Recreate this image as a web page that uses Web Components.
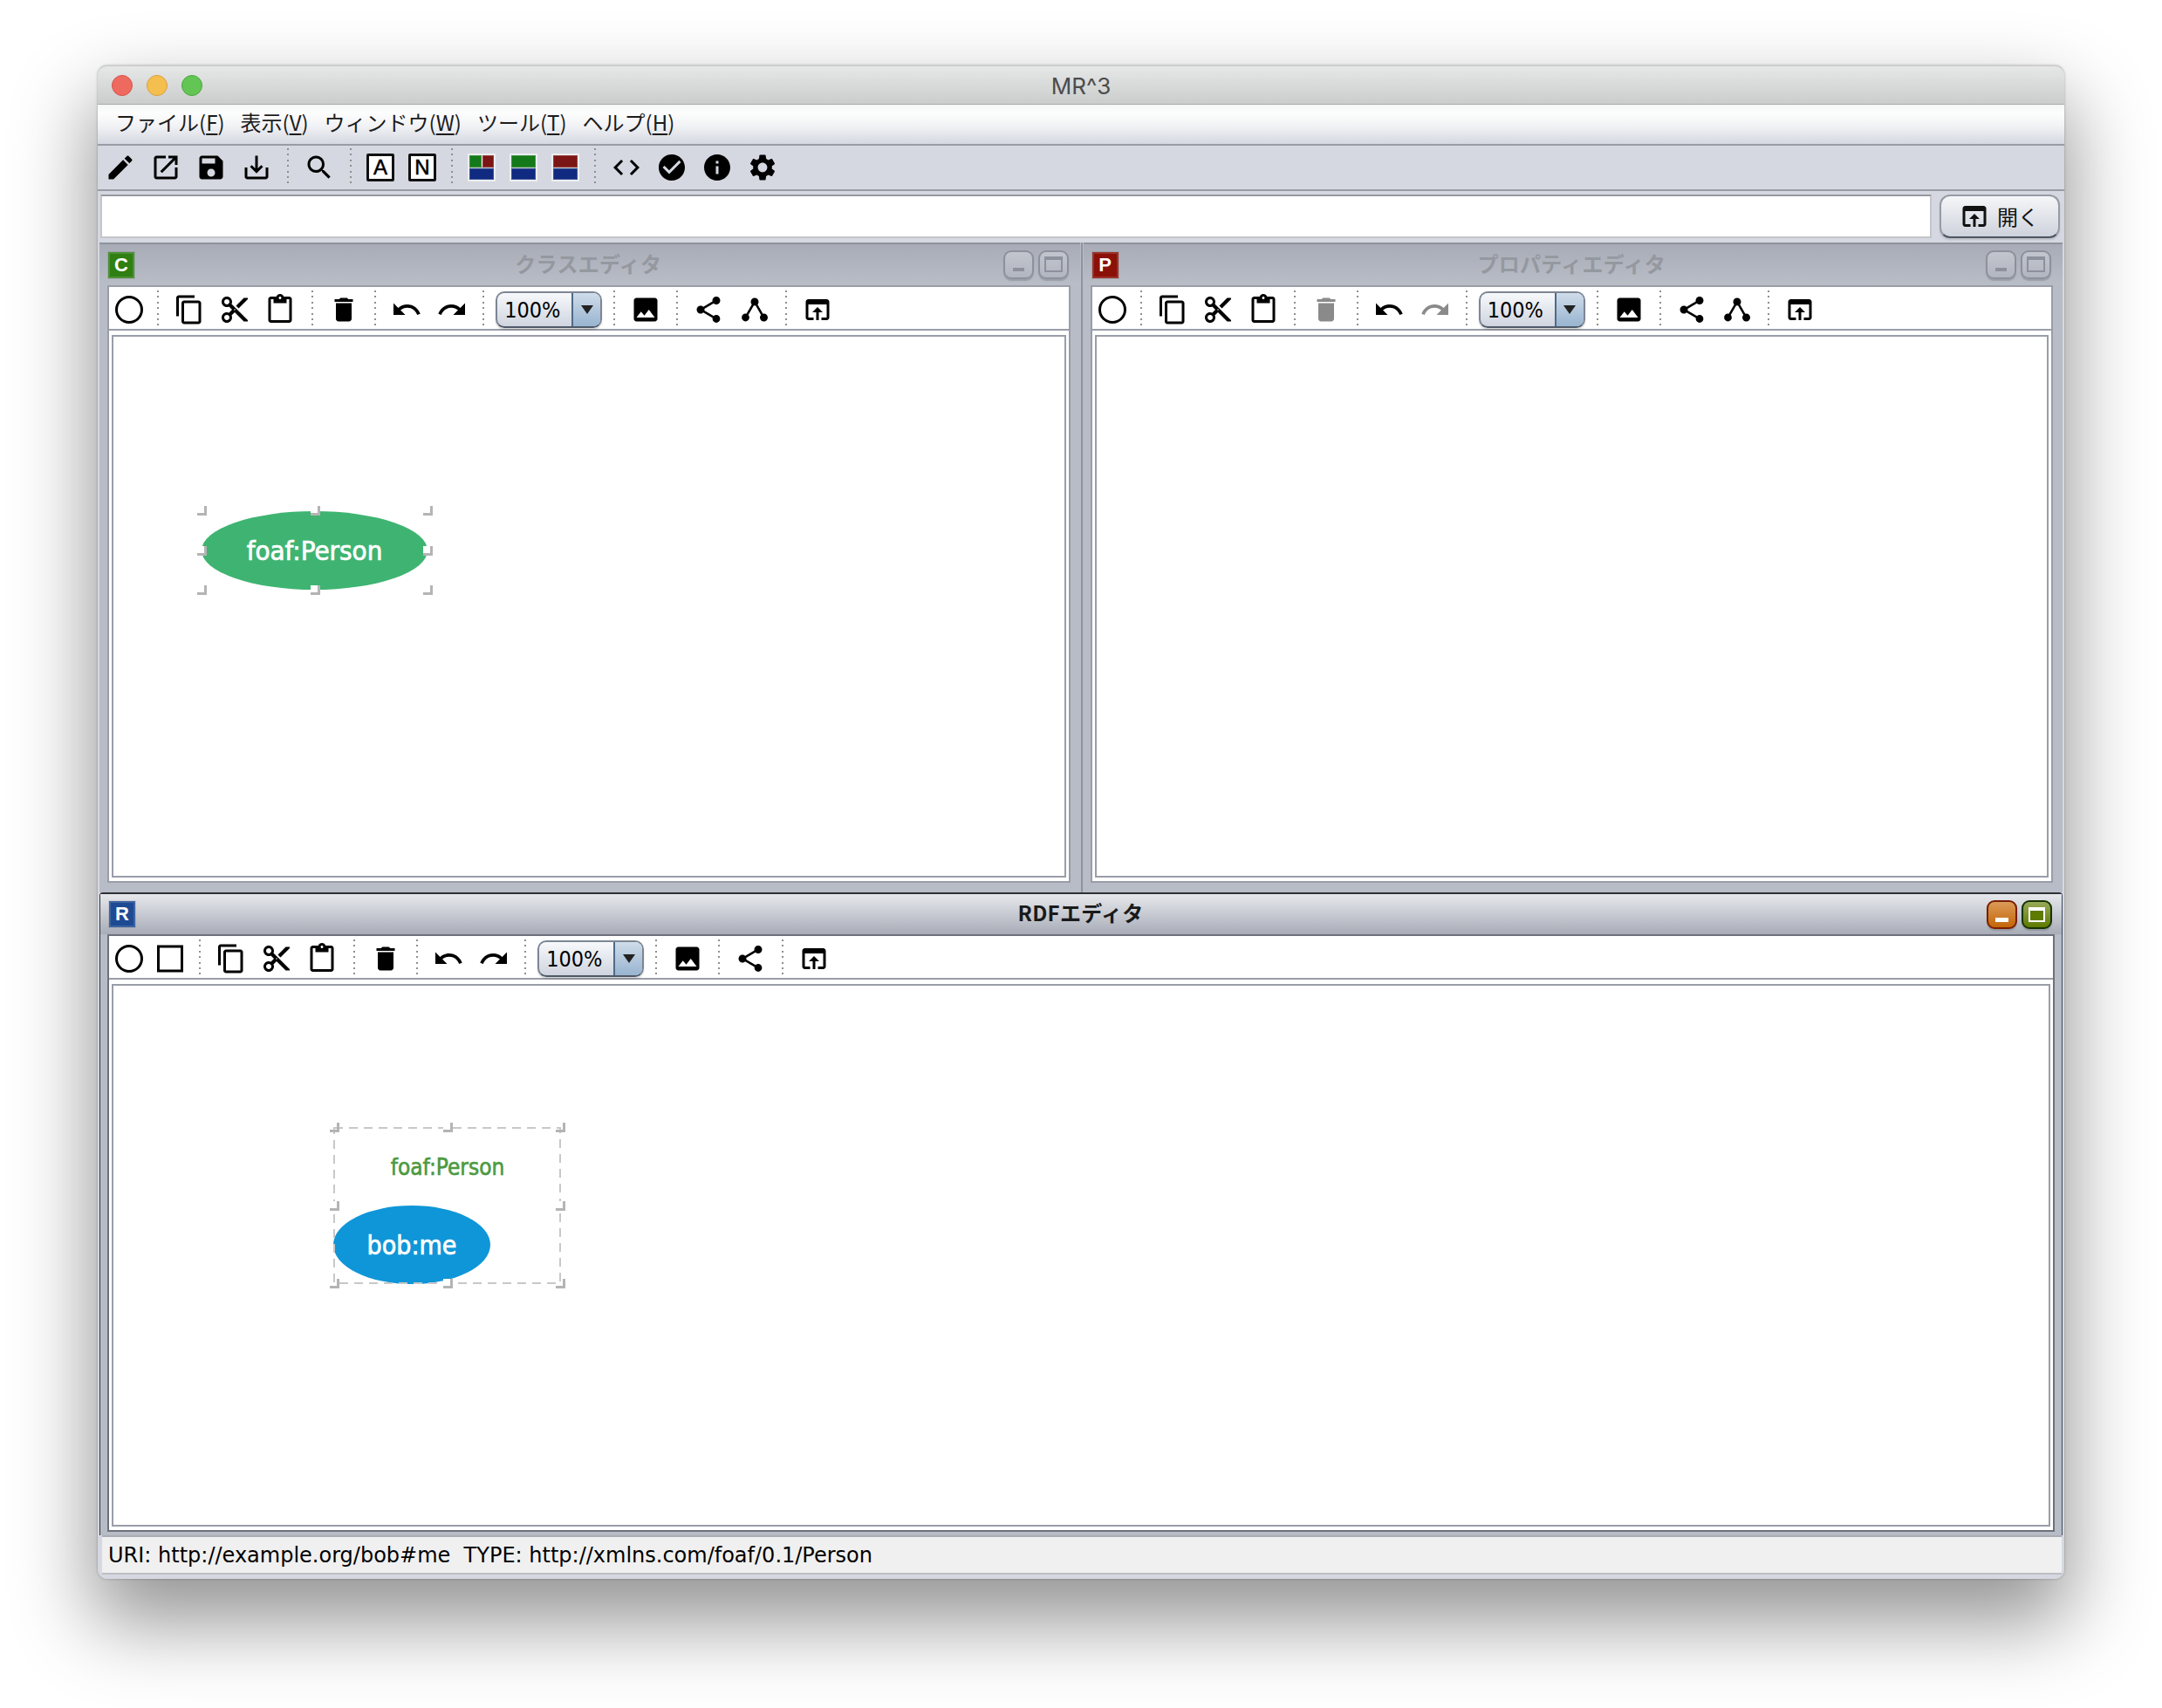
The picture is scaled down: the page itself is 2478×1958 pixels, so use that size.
<!DOCTYPE html>
<html lang="ja">
<head>
<meta charset="utf-8">
<title>MR^3</title>
<style>
  html, body { margin: 0; background: #fff; }
  body { padding: 75px 0 0 112px; height: 1958px; box-sizing: border-box; overflow: hidden; font-family: "DejaVu Sans", "Noto Sans CJK JP", sans-serif; }
</style>
</head>
<body>
<mac-window label="MR^3">
  <menu-bar>
    <menu-item label="ファイル" key="F"></menu-item>
    <menu-item label="表示" key="V"></menu-item>
    <menu-item label="ウィンドウ" key="W"></menu-item>
    <menu-item label="ツール" key="T"></menu-item>
    <menu-item label="ヘルプ" key="H"></menu-item>
  </menu-bar>
  <tool-bar main>
    <tool-icon name="edit"></tool-icon>
    <tool-icon name="openNew"></tool-icon>
    <tool-icon name="save"></tool-icon>
    <tool-icon name="download"></tool-icon>
    <tool-sep></tool-sep>
    <tool-icon name="search"></tool-icon>
    <tool-sep></tool-sep>
    <letter-icon>A</letter-icon>
    <letter-icon>N</letter-icon>
    <tool-sep></tool-sep>
    <layout-icon top="split"></layout-icon>
    <layout-icon top="#14791a"></layout-icon>
    <layout-icon top="#7c1515"></layout-icon>
    <tool-sep></tool-sep>
    <tool-icon name="code"></tool-icon>
    <tool-icon name="check"></tool-icon>
    <tool-icon name="info"></tool-icon>
    <tool-icon name="settings"></tool-icon>
  </tool-bar>
  <uri-bar></uri-bar>
  <editor-desktop>
    <div slot="top" style="display:flex;height:100%;min-width:0">
      <editor-panel label="クラスエディタ" badge="C" color="#2f7f12">
        <tool-bar slot="tools">
          <tool-icon name="circle" w="46"></tool-icon>
          <tool-sep></tool-sep>
          <tool-icon name="copy"></tool-icon>
          <tool-icon name="cut"></tool-icon>
          <tool-icon name="paste"></tool-icon>
          <tool-sep></tool-sep>
          <tool-icon name="trash"></tool-icon>
          <tool-sep></tool-sep>
          <tool-icon name="undo"></tool-icon>
          <tool-icon name="redo"></tool-icon>
          <tool-sep></tool-sep>
          <zoom-combo></zoom-combo>
          <tool-sep></tool-sep>
          <tool-icon name="image"></tool-icon>
          <tool-sep></tool-sep>
          <tool-icon name="share"></tool-icon>
          <tool-icon name="tree"></tool-icon>
          <tool-sep></tool-sep>
          <tool-icon name="openBrowser"></tool-icon>
        </tool-bar>
        <graph-node x="101" y="200" w="259" h="90" color="#3fb472" size="31">foaf:Person</graph-node>
        <sel-frame x="96" y="194" w="270" h="102"></sel-frame>
      </editor-panel>
      <panel-split></panel-split>
      <editor-panel label="プロパティエディタ" badge="P" color="#8b1008" style="--pad-l:8px">
        <tool-bar slot="tools">
          <tool-icon name="circle" w="46"></tool-icon>
          <tool-sep></tool-sep>
          <tool-icon name="copy"></tool-icon>
          <tool-icon name="cut"></tool-icon>
          <tool-icon name="paste"></tool-icon>
          <tool-sep></tool-sep>
          <tool-icon name="trash" off></tool-icon>
          <tool-sep></tool-sep>
          <tool-icon name="undo"></tool-icon>
          <tool-icon name="redo" off></tool-icon>
          <tool-sep></tool-sep>
          <zoom-combo></zoom-combo>
          <tool-sep></tool-sep>
          <tool-icon name="image"></tool-icon>
          <tool-sep></tool-sep>
          <tool-icon name="share"></tool-icon>
          <tool-icon name="tree"></tool-icon>
          <tool-sep></tool-sep>
          <tool-icon name="openBrowser"></tool-icon>
        </tool-bar>
      </editor-panel>
    </div>
    <editor-panel slot="bottom" active label="RDFエディタ" badge="R" color="#1d4a93">
      <tool-bar slot="tools">
        <tool-icon name="circle" w="46"></tool-icon>
        <tool-icon name="rect" w="48"></tool-icon>
        <tool-sep></tool-sep>
        <tool-icon name="copy"></tool-icon>
        <tool-icon name="cut"></tool-icon>
        <tool-icon name="paste"></tool-icon>
        <tool-sep></tool-sep>
        <tool-icon name="trash"></tool-icon>
        <tool-sep></tool-sep>
        <tool-icon name="undo"></tool-icon>
        <tool-icon name="redo"></tool-icon>
        <tool-sep></tool-sep>
        <zoom-combo></zoom-combo>
        <tool-sep></tool-sep>
        <tool-icon name="image"></tool-icon>
        <tool-sep></tool-sep>
        <tool-icon name="share"></tool-icon>
        <tool-sep></tool-sep>
        <tool-icon name="openBrowser"></tool-icon>
      </tool-bar>
      <sel-frame x="248" y="157" w="270" h="190" dashed></sel-frame>
      <graph-node x="252" y="252" w="180" h="90" color="#0f96d8" size="30">bob:me</graph-node>
      <graph-label x="253" y="191" w="260" color="#4c9a3f" size="26">foaf:Person</graph-label>
    </editor-panel>
  </editor-desktop>
  <status-bar>URI: http://example.org/bob#me&nbsp;&nbsp;TYPE: http://xmlns.com/foaf/0.1/Person</status-bar>
</mac-window>

<script>
// material style icons, 24x24 viewBox
const ICONS = {
  edit: 'M3 17.25V21h3.75L17.81 9.94l-3.75-3.75L3 17.25zM20.71 7.04c.39-.39.39-1.02 0-1.41l-2.34-2.34c-.39-.39-1.02-.39-1.41 0l-1.83 1.83 3.75 3.75 1.83-1.83z',
  openNew: 'M19 19H5V5h7V3H5c-1.11 0-2 .9-2 2v14c0 1.1.89 2 2 2h14c1.1 0 2-.9 2-2v-7h-2v7zM14 3v2h3.59l-9.83 9.83 1.41 1.41L19 6.41V10h2V3h-7z',
  save: 'M17 3H5c-1.11 0-2 .9-2 2v14c0 1.1.89 2 2 2h14c1.1 0 2-.9 2-2V7l-4-4zm-5 16c-1.66 0-3-1.34-3-3s1.34-3 3-3 3 1.34 3 3-1.34 3-3 3zm3-10H5V5h10v4z',
  download: 'M19 12v7H5v-7H3v7c0 1.1.9 2 2 2h14c1.1 0 2-.9 2-2v-7h-2zm-6 .67l2.59-2.58L17 11.5l-5 5-5-5 1.41-1.41L11 12.67V3h2z',
  search: 'M15.5 14h-.79l-.28-.27C15.41 12.59 16 11.11 16 9.5 16 5.91 13.09 3 9.5 3S3 5.91 3 9.5 5.91 16 9.5 16c1.61 0 3.09-.59 4.23-1.57l.27.28v.79l5 4.99L20.49 19l-4.99-5zm-6 0C7.01 14 5 11.99 5 9.5S7.01 5 9.5 5 14 7.01 14 9.5 11.99 14 9.5 14z',
  code: 'M9.4 16.6L4.8 12l4.6-4.6L8 6l-6 6 6 6 1.4-1.4zm5.2 0l4.6-4.6-4.6-4.6L16 6l6 6-6 6-1.4-1.4z',
  check: 'M12 2C6.48 2 2 6.48 2 12s4.48 10 10 10 10-4.48 10-10S17.52 2 12 2zm-2 15l-5-5 1.41-1.41L10 14.17l7.59-7.59L19 8l-9 9z',
  info: 'M12 2C6.48 2 2 6.48 2 12s4.48 10 10 10 10-4.48 10-10S17.52 2 12 2zm1 15h-2v-6h2v6zm0-8h-2V7h2v2z',
  settings: 'M19.14 12.94c.04-.3.06-.61.06-.94 0-.32-.02-.64-.07-.94l2.03-1.58c.18-.14.23-.41.12-.61l-1.92-3.32c-.12-.22-.37-.29-.59-.22l-2.39.96c-.5-.38-1.03-.7-1.62-.94l-.36-2.54c-.04-.24-.24-.41-.48-.41h-3.84c-.24 0-.43.17-.47.41l-.36 2.54c-.59.24-1.13.57-1.62.94l-2.39-.96c-.22-.08-.47 0-.59.22L2.74 8.87c-.12.21-.08.47.12.61l2.03 1.58c-.05.3-.09.63-.09.94s.02.64.07.94l-2.03 1.58c-.18.14-.23.41-.12.61l1.92 3.32c.12.22.37.29.59.22l2.39-.96c.5.38 1.03.7 1.62.94l.36 2.54c.05.24.24.41.48.41h3.84c.24 0 .44-.17.47-.41l.36-2.54c.59-.24 1.13-.56 1.62-.94l2.39.96c.22.08.47 0 .59-.22l1.92-3.32c.12-.22.07-.47-.12-.61l-2.01-1.58zM12 15.6c-1.98 0-3.6-1.62-3.6-3.6s1.62-3.6 3.6-3.6 3.6 1.62 3.6 3.6-1.62 3.6-3.6 3.6z',
  copy: 'M16 1H4c-1.1 0-2 .9-2 2v14h2V3h12V1zm3 4H8c-1.1 0-2 .9-2 2v14c0 1.1.9 2 2 2h11c1.1 0 2-.9 2-2V7c0-1.1-.9-2-2-2zm0 16H8V7h11v14z',
  cut: 'M9.64 7.64c.23-.5.36-1.05.36-1.64 0-2.21-1.79-4-4-4S2 3.79 2 6s1.79 4 4 4c.59 0 1.14-.13 1.64-.36L10 12l-2.36 2.36C7.14 14.13 6.59 14 6 14c-2.21 0-4 1.79-4 4s1.79 4 4 4 4-1.79 4-4c0-.59-.13-1.14-.36-1.64L12 14l7 7h3v-1L9.64 7.64zM6 8c-1.1 0-2-.89-2-2s.9-2 2-2 2 .89 2 2-.9 2-2 2zm0 12c-1.1 0-2-.89-2-2s.9-2 2-2 2 .89 2 2-.9 2-2 2zm6-7.5c-.28 0-.5-.22-.5-.5s.22-.5.5-.5.5.22.5.5-.22.5-.5.5zM19 3l-6 6 2 2 7-7V3z',
  paste: 'M19 2h-4.18C14.4.84 13.3 0 12 0c-1.3 0-2.4.84-2.82 2H5c-1.1 0-2 .9-2 2v16c0 1.1.9 2 2 2h14c1.1 0 2-.9 2-2V4c0-1.1-.9-2-2-2zm-7 0c.55 0 1 .45 1 1s-.45 1-1 1-1-.45-1-1 .45-1 1-1zm7 18H5V4h2v3h10V4h2v16z',
  trash: 'M6 19c0 1.1.9 2 2 2h8c1.1 0 2-.9 2-2V7H6v12zM19 4h-3.5l-1-1h-5l-1 1H5v2h14V4z',
  undo: 'M12.5 8c-2.65 0-5.05.99-6.9 2.6L2 7v9h9l-3.62-3.62c1.39-1.16 3.16-1.88 5.12-1.88 3.54 0 6.55 2.31 7.6 5.5l2.37-.78C21.08 11.03 17.15 8 12.5 8z',
  redo: 'M18.4 10.6C16.55 8.99 14.15 8 11.5 8c-4.65 0-8.58 3.03-9.96 7.22L3.9 16c1.05-3.19 4.05-5.5 7.6-5.5 1.95 0 3.73.72 5.12 1.88L13 16h9V7l-3.6 3.6z',
  image: 'M21 19V5c0-1.1-.9-2-2-2H5c-1.1 0-2 .9-2 2v14c0 1.1.9 2 2 2h14c1.1 0 2-.9 2-2zM8.5 13.5l2.5 3.01L14.5 12l4.5 6H5l3.5-4.5z',
  share: 'M18 16.08c-.76 0-1.44.3-1.96.77L8.91 12.7c.05-.23.09-.46.09-.7s-.04-.47-.09-.7l7.05-4.11c.54.5 1.25.81 2.04.81 1.66 0 3-1.34 3-3s-1.34-3-3-3-3 1.34-3 3c0 .24.04.47.09.7L8.04 9.81C7.5 9.31 6.79 9 6 9c-1.66 0-3 1.34-3 3s1.34 3 3 3c.79 0 1.5-.31 2.04-.81l7.12 4.16c-.05.21-.08.43-.08.65 0 1.61 1.31 2.92 2.92 2.92 1.61 0 2.92-1.31 2.92-2.92s-1.31-2.92-2.92-2.92z',
  openBrowser: 'M19 4H5c-1.11 0-2 .9-2 2v12c0 1.1.89 2 2 2h4v-2H5V8h14v10h-4v2h4c1.1 0 2-.9 2-2V6c0-1.1-.89-2-2-2zm-7 6l-4 4h3v6h2v-6h3l-4-4z'
};
const LUCIDA = '"DejaVu Sans", "Noto Sans CJK JP", sans-serif';
const JP = '"Noto Sans CJK JP", "DejaVu Sans", sans-serif';

function iconSvg(name) {
  if (name === 'circle') return '<svg viewBox="0 0 36 36" width="36" height="36"><circle cx="18" cy="18" r="14.5" fill="none" stroke="currentColor" stroke-width="3"/></svg>';
  if (name === 'rect') return '<svg viewBox="0 0 36 36" width="36" height="36"><rect x="4.5" y="4" width="27" height="28" fill="none" stroke="currentColor" stroke-width="3"/></svg>';
  if (name === 'tree') return '<svg viewBox="0 0 24 24" width="36" height="36"><path transform="rotate(90 12 12)" fill="currentColor" d="' + ICONS.share + '"/></svg>';
  return '<svg viewBox="0 0 24 24" width="36" height="36"><path fill="currentColor" d="' + ICONS[name] + '"/></svg>';
}

class MacWindow extends HTMLElement {
  constructor() {
    super();
    this.attachShadow({ mode: 'open' });
    this.shadowRoot.innerHTML = `
      <style>
        :host {
          display: flex;
          flex-direction: column;
          width: 2254px;
          height: 1735px;
          border-radius: 11px;
          background: #d5d8e1;
          box-shadow: 0 44px 90px 6px rgba(0, 0, 0, 0.42), 0 0 3px rgba(0, 0, 0, 0.3);
        }
        .title {
          flex: none;
          border-top: 1px solid #c9c9c9;
          border-radius: 11px 11px 0 0;
          background: linear-gradient(#e6e7e7, #cbcccc);
          border-bottom: 1px solid #a9a9a9;
          height: 43px;
          display: grid;
          grid-template-columns: 1fr auto 1fr;
          align-items: center;
        }
        .lights { display: flex; gap: 16px; padding-left: 16px; }
        .lights i { width: 24px; height: 24px; border-radius: 50%; box-sizing: border-box; border: 1px solid; }
        .red { background: #ee6a5f; border-color: #d5534a !important; }
        .amber { background: #f5bf4f; border-color: #d8a03a !important; }
        .green { background: #62c554; border-color: #4aa83e !important; }
        .name { font: 26px Inter, "Liberation Sans", sans-serif; color: #4c4c4c; padding-top: 1px; }
      </style>
      <div class="title">
        <div class="lights"><i class="red"></i><i class="amber"></i><i class="green"></i></div>
        <div class="name"></div>
        <div></div>
      </div>
      <slot></slot>
    `;
    this.shadowRoot.querySelector('.name').textContent = this.getAttribute('label');
  }
}

class MenuBar extends HTMLElement {
  constructor() {
    super();
    this.attachShadow({ mode: 'open' });
    this.shadowRoot.innerHTML = `
      <style>
        :host {
          display: flex;
          flex: none;
          align-items: center;
          gap: 18px;
          height: 45px;
          box-sizing: border-box;
          padding: 0 0 5px 20px;
          background: linear-gradient(#f4f6f6 0, #fdfdfd 22%, #f1f2f5 55%, #d5d8e1 100%);
        }
      </style>
      <slot></slot>
    `;
  }
}

class MenuItem extends HTMLElement {
  constructor() {
    super();
    this.attachShadow({ mode: 'open' });
    this.shadowRoot.innerHTML = `
      <style>
        :host { display: block; font: 24px/1 ${JP}; color: #1c1c1c; white-space: nowrap; }
        u { text-underline-offset: 3px; text-decoration-thickness: 2px; }
      </style>
      ${this.getAttribute('label')}(<u>${this.getAttribute('key')}</u>)
    `;
  }
}

class ToolBar extends HTMLElement {
  constructor() {
    super();
    this.attachShadow({ mode: 'open' });
    this.shadowRoot.innerHTML = `
      <style>
        :host {
          display: flex;
          flex: none;
          align-items: center;
          box-sizing: border-box;
          height: 50px;
          padding-top: 4px;
          background: #fff;
          border-bottom: 2px solid #999da8;
        }
        :host([main]) {
          --tool-w: 52px;
          height: 52px;
          padding-top: 0;
          border-top: 2px solid #999ba5;
          border-bottom: 0;
          background: #d5d8e1;
        }
      </style>
      <slot></slot>
    `;
  }
}

class ToolIcon extends HTMLElement {
  constructor() {
    super();
    this.attachShadow({ mode: 'open' });
    this.shadowRoot.innerHTML = `
      <style>
        :host { display: flex; flex: none; align-items: center; justify-content: center; width: var(--tool-w, 52.2px); height: 44px; color: #000; }
        :host([off]) { color: #8a8a8a; }
        svg { display: block; }
      </style>
      ${iconSvg(this.getAttribute('name'))}
    `;
    if (this.hasAttribute('w')) this.style.width = this.getAttribute('w') + 'px';
  }
}

class ToolSep extends HTMLElement {
  constructor() {
    super();
    this.attachShadow({ mode: 'open' });
    this.shadowRoot.innerHTML = `
      <style>
        :host { display: flex; flex: none; justify-content: center; width: 20px; height: 44px; }
        i { width: 2px; height: 100%; background: repeating-linear-gradient(#8f8f8f 0 2px, transparent 2px 6.4px); }
      </style>
      <i></i>
    `;
  }
}

class LetterIcon extends HTMLElement {
  constructor() {
    super();
    this.attachShadow({ mode: 'open' });
    this.shadowRoot.innerHTML = `
      <style>
        :host { display: flex; flex: none; justify-content: center; width: 48px; }
        b {
          display: block;
          width: 32px;
          height: 32px;
          box-sizing: border-box;
          border: 3px solid #111;
          border-radius: 2px;
          background: #fff;
          font: 24px/26px "Liberation Sans", sans-serif;
          color: #000;
          text-align: center;
          -webkit-text-stroke: 0.5px #000;
        }
      </style>
      <b><slot></slot></b>
    `;
  }
}

class LayoutIcon extends HTMLElement {
  constructor() {
    super();
    this.attachShadow({ mode: 'open' });
    const top = this.getAttribute('top');
    const cap = top === 'split'
      ? '<rect x="2.5" y="2.5" width="13" height="13" fill="#14791a" stroke="#3f9240"/><rect x="17.5" y="2.5" width="12" height="13" fill="#7c1515" stroke="#964040"/>'
      : `<rect x="2.5" y="2.5" width="27" height="13" fill="${top}" stroke="${top === '#14791a' ? '#3f9240' : '#964040'}"/>`;
    this.shadowRoot.innerHTML = `
      <style>
        :host { display: flex; flex: none; justify-content: center; width: 48px; }
        svg { display: block; }
      </style>
      <svg viewBox="0 0 32 32" width="32" height="32">
        <rect width="32" height="32" fill="#eceef1"/>
        <rect x="2" y="15" width="28" height="2" fill="#bfc3cb"/>
        ${cap}
        <rect x="2.5" y="17.5" width="27" height="12" fill="#0f2a80" stroke="#3a5296"/>
      </svg>
    `;
  }
}

class ZoomCombo extends HTMLElement {
  constructor() {
    super();
    this.attachShadow({ mode: 'open' });
    this.shadowRoot.innerHTML = `
      <style>
        :host {
          display: flex;
          flex: none;
          box-sizing: border-box;
          width: 122px;
          height: 42px;
          margin: 0 4px;
          border: 2px solid #7d8694;
          border-bottom-color: #4e5867;
          border-radius: 10px;
          overflow: hidden;
          background: linear-gradient(#f7f9fb, #cfd4df);
          box-shadow: 0 2px 2px rgba(0, 0, 0, 0.15);
        }
        .val { flex: 1; font: 25px/39px ${LUCIDA}; font-stretch: condensed; color: #000; padding-left: 8px; }
        .arr {
          width: 31px;
          border-left: 2px solid #4e6a88;
          background: linear-gradient(#cfdcea, #98b4d0);
          display: flex;
          align-items: center;
          justify-content: center;
        }
        .arr i { border: 7px solid transparent; border-top: 10px solid #222; border-bottom: 0; }
      </style>
      <div class="val">100%</div>
      <div class="arr"><i></i></div>
    `;
  }
}

class UriBar extends HTMLElement {
  constructor() {
    super();
    this.attachShadow({ mode: 'open' });
    this.shadowRoot.innerHTML = `
      <style>
        :host {
          display: flex;
          flex: none;
          gap: 9px;
          box-sizing: border-box;
          height: 61px;
          padding: 4px 5px 5px 3px;
          border-top: 2px solid #999ba5;
          background: #d5d8e1;
        }
        .field {
          flex: 1;
          background: #fff;
          border: 2px solid #c4c5c9;
          border-top-color: #96989f;
        }
        button {
          display: flex;
          align-items: center;
          gap: 8px;
          width: 138px;
          padding: 0 0 0 24px;
          box-sizing: border-box;
          border: 2px solid #969ba6;
          border-bottom-color: #4e5561;
          border-radius: 12px;
          background: linear-gradient(#f5f6f8, #ced2dc);
          box-shadow: 0 2px 2px rgba(0, 0, 0, 0.12);
          font: 24px/1 ${JP};
          color: #111;
        }
        svg { margin-left: -4px; flex: none; display: block; }
      </style>
      <div class="field"></div>
      <button>${iconSvg('openBrowser')}開く</button>
    `;
  }
}

class EditorDesktop extends HTMLElement {
  constructor() {
    super();
    this.attachShadow({ mode: 'open' });
    this.shadowRoot.innerHTML = `
      <style>
        :host {
          display: grid;
          flex: 1;
          min-height: 0;
          grid-template-rows: 745px 1fr;
          padding: 0 2px;
          background: #d5d8e1;
        }
      </style>
      <slot name="top"></slot>
      <slot name="bottom"></slot>
    `;
  }
}

class PanelSplit extends HTMLElement {
  constructor() {
    super();
    this.attachShadow({ mode: 'open' });
    this.shadowRoot.innerHTML = `
      <style>
        :host { display: block; flex: none; width: 4px; background: linear-gradient(90deg, #b8bcc6 25%, #8f939d 25% 75%, #b8bcc6 75%); }
      </style>
    `;
  }
}

class EditorPanel extends HTMLElement {
  constructor() {
    super();
    this.attachShadow({ mode: 'open' });
    this.shadowRoot.innerHTML = `
      <style>
        :host {
          display: flex;
          flex-direction: column;
          flex: 1;
          min-width: 0;
          min-height: 0;
          box-sizing: border-box;
          padding: 0 11px 11px var(--pad-l, 9px);
          background: #b8bcc6;
          border-top: 2px solid #8f939d;
        }
        :host([active]) {
          padding: 0 8px 4px 8px;
          border-top: 2px solid #2c3036;
          border-left: 1.5px solid #30343a;
          border-right: 1.5px solid #3a4a5f;
          border-radius: 4px 4px 0 0;
        }
        .head {
          flex: none;
          display: grid;
          grid-template-columns: 1fr auto 1fr;
          align-items: center;
          height: 47px;
          margin: 0 -11px 0 calc(-1 * var(--pad-l, 9px));
          padding: 0 13px 0 10px;
          background: linear-gradient(#a8acb7, #b9bdc6);
          font: bold 24px/1 ${JP};
          letter-spacing: 0.3px;
          color: #94989f;
        }
        .ttl { padding-bottom: 3px; }
        :host([active]) .ttl { padding-bottom: 5px; }
        :host([active]) .head {
          margin: 0 -8px;
          padding: 0 11px 0 10px;
          height: 46px;
          background: linear-gradient(#e6e8ec, #a8acb7);
          color: #1a1a1a;
        }
        .badge {
          display: block;
          width: 30px;
          height: 30px;
          box-sizing: border-box;
          border: 2px solid rgba(255, 255, 255, 0.14);
          outline: 1px solid rgba(0, 0, 0, 0.08);
          color: #fff;
          font: bold 22px/26px "Liberation Sans", sans-serif;
          letter-spacing: 0;
          text-align: center;
        }
        .btns { display: flex; gap: 5px; justify-content: flex-end; }
        .btn {
          position: relative;
          width: 35px;
          height: 33px;
          box-sizing: border-box;
          border: 2px solid #8d919c;
          border-radius: 9px;
          background: linear-gradient(#c2c5cd, #b2b6c0);
          box-shadow: 0 2px 1px rgba(70, 74, 84, 0.25);
        }
        .btn i { position: absolute; display: block; box-sizing: border-box; }
        .min i { left: 9px; right: 9px; bottom: 7px; height: 4px; background: #8d919c; }
        .max i { left: 5px; right: 5px; top: 5px; bottom: 6px; border: 2px solid #8d919c; border-top-width: 4px; }
        :host([active]) .min { background: linear-gradient(#db9b58, #c46608); border-color: #7a1e00; }
        :host([active]) .min i { background: #fff; left: 8px; right: 8px; height: 5px; bottom: 6px; }
        :host([active]) .max { background: linear-gradient(#97aa58, #5f7a00); border-color: #163300; }
        :host([active]) .max i { border-color: #fff; background: #5f7a00; left: 6px; right: 6px; top: 6px; bottom: 6px; }
        .pane {
          flex: 1;
          min-height: 0;
          display: flex;
          flex-direction: column;
          background: #fff;
          border: 2px solid #999da8;
        }
        :host([active]) .pane { border-color: #6d717c; }
        .canvas {
          flex: 1;
          min-height: 0;
          position: relative;
          margin: 5px 3px 4px;
          border: 2px solid #999da8;
          background: #fff;
        }
      </style>
      <div class="head">
        <div><span class="badge"></span></div>
        <div class="ttl"></div>
        <div class="btns">
          <div class="btn min"><i></i></div>
          <div class="btn max"><i></i></div>
        </div>
      </div>
      <div class="pane">
        <slot name="tools"></slot>
        <div class="canvas"><slot></slot></div>
      </div>
    `;
    const badge = this.shadowRoot.querySelector('.badge');
    badge.textContent = this.getAttribute('badge');
    badge.style.background = this.getAttribute('color');
    this.shadowRoot.querySelector('.ttl').textContent = this.getAttribute('label');
  }
}

// nodes sit on a free canvas, so their place comes from attributes
function placeOnCanvas(el) {
  el.style.left = el.getAttribute('x') + 'px';
  el.style.top = el.getAttribute('y') + 'px';
  el.style.width = el.getAttribute('w') + 'px';
  if (el.hasAttribute('h')) el.style.height = el.getAttribute('h') + 'px';
}

class GraphNode extends HTMLElement {
  constructor() {
    super();
    this.attachShadow({ mode: 'open' });
    this.shadowRoot.innerHTML = `
      <style>
        :host {
          position: absolute;
          display: flex;
          align-items: center;
          justify-content: center;
          border-radius: 50%;
          color: #fff;
          font-family: ${LUCIDA};
          font-stretch: condensed;
          -webkit-text-stroke: 0.7px #fff;
        }
      </style>
      <slot></slot>
    `;
    placeOnCanvas(this);
    this.style.background = this.getAttribute('color');
    this.style.fontSize = this.getAttribute('size') + 'px';
  }
}

class GraphLabel extends HTMLElement {
  constructor() {
    super();
    this.attachShadow({ mode: 'open' });
    this.shadowRoot.innerHTML = `
      <style>
        :host { position: absolute; display: block; text-align: center; line-height: 34px; font-family: ${LUCIDA}; font-stretch: condensed; -webkit-text-stroke: 0.6px currentColor; }
      </style>
      <slot></slot>
    `;
    placeOnCanvas(this);
    this.style.color = this.getAttribute('color');
    this.style.fontSize = this.getAttribute('size') + 'px';
  }
}

class SelFrame extends HTMLElement {
  constructor() {
    super();
    this.attachShadow({ mode: 'open' });
    const w = +this.getAttribute('w'), h = +this.getAttribute('h');
    const spots = [[0, 0], [.5, 0], [1, 0], [0, .5], [1, .5], [0, 1], [.5, 1], [1, 1]];
    const handles = spots.map(([a, b]) => {
      const plain = a !== .5 && b !== .5;
      return `<i style="left:${a * (w - 11)}px;top:${b * (h - 11)}px${plain ? ';background:none' : ''}"></i>`;
    }).join('');
    const dash = this.hasAttribute('dashed')
      ? `<svg width="${w}" height="${h}"><rect x="5" y="6" width="${w - 11}" height="${h - 12}" fill="none" stroke="#c8c8c8" stroke-width="2" stroke-dasharray="10 7"/></svg>`
      : '';
    this.shadowRoot.innerHTML = `
      <style>
        :host { position: absolute; display: block; z-index: 2; }
        svg { position: absolute; left: 0; top: 0; }
        i {
          position: absolute;
          width: 11px;
          height: 11px;
          box-sizing: border-box;
          background: #fff;
          border-right: 3px solid #b4b4b4;
          border-bottom: 3px solid #b4b4b4;
        }
      </style>
      ${dash}${handles}
    `;
    placeOnCanvas(this);
  }
}

class StatusBar extends HTMLElement {
  constructor() {
    super();
    this.attachShadow({ mode: 'open' });
    this.shadowRoot.innerHTML = `
      <style>
        :host {
          display: block;
          flex: none;
          height: 50px;
          box-sizing: border-box;
          padding: 0 3px 5px 5px;
          background: #d5d8e1;
          border-radius: 0 0 11px 11px;
        }
        div {
          height: 100%;
          box-sizing: border-box;
          padding-left: 7px;
          background: #f0f0f0;
          border-top: 2px solid #a9acb4;
          border-bottom: 2px solid #bcbec4;
          font: 24px/43px ${LUCIDA};
          color: #000;
          white-space: nowrap;
        }
      </style>
      <div><slot></slot></div>
    `;
  }
}

customElements.define('mac-window', MacWindow);
customElements.define('menu-bar', MenuBar);
customElements.define('menu-item', MenuItem);
customElements.define('tool-bar', ToolBar);
customElements.define('tool-icon', ToolIcon);
customElements.define('tool-sep', ToolSep);
customElements.define('letter-icon', LetterIcon);
customElements.define('layout-icon', LayoutIcon);
customElements.define('zoom-combo', ZoomCombo);
customElements.define('uri-bar', UriBar);
customElements.define('editor-desktop', EditorDesktop);
customElements.define('panel-split', PanelSplit);
customElements.define('editor-panel', EditorPanel);
customElements.define('graph-node', GraphNode);
customElements.define('graph-label', GraphLabel);
customElements.define('sel-frame', SelFrame);
customElements.define('status-bar', StatusBar);
</script>
</body>
</html>
